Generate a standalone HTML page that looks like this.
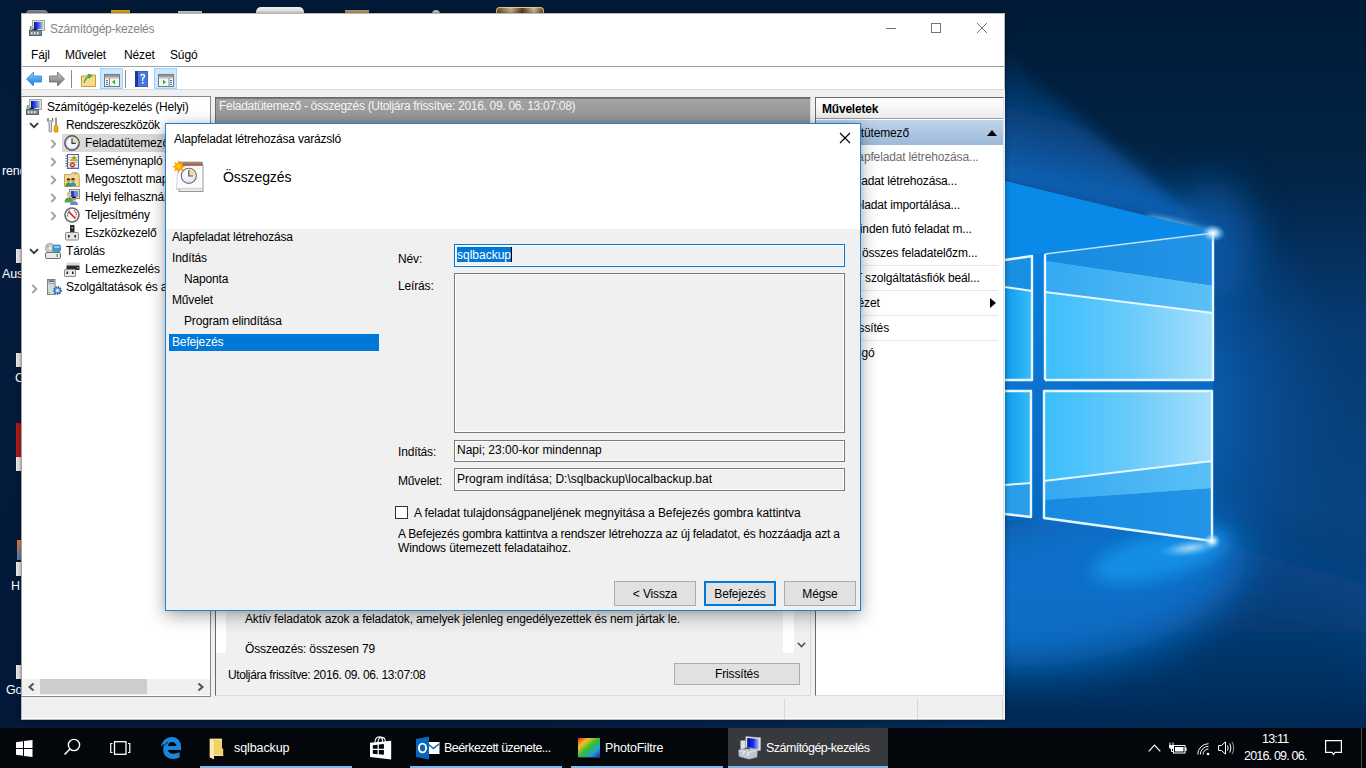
<!DOCTYPE html>
<html><head><meta charset="utf-8">
<style>
*{margin:0;padding:0;box-sizing:border-box}
html,body{width:1366px;height:768px;overflow:hidden;background:#011b39}
body{position:relative;font-family:"Liberation Sans",sans-serif;font-size:12px;color:#000}
.a{position:absolute}
.t{position:absolute;white-space:nowrap;font-size:12px;line-height:15px;letter-spacing:-0.15px;margin-top:1px}
svg{position:absolute;overflow:visible}
</style></head><body>
<svg class="a" style="left:0;top:0" width="1366" height="728" viewBox="0 0 1366 728">
<defs>
<linearGradient id="bgv" x1="0" y1="0" x2="0" y2="1">
<stop offset="0" stop-color="#001a37"/><stop offset="0.25" stop-color="#022547"/><stop offset="0.45" stop-color="#063a72"/><stop offset="0.7" stop-color="#084482"/><stop offset="0.85" stop-color="#053a72"/><stop offset="1" stop-color="#032a55"/>
</linearGradient>
<radialGradient id="glow1" cx="1090" cy="400" r="260" gradientUnits="userSpaceOnUse">
<stop offset="0" stop-color="#0a78d8" stop-opacity="1"/><stop offset="0.5" stop-color="#0a64bb" stop-opacity="0.7"/><stop offset="1" stop-color="#0a4f95" stop-opacity="0"/>
</radialGradient>
<linearGradient id="beamTop" gradientUnits="userSpaceOnUse" x1="0" y1="60" x2="0" y2="200">
<stop offset="0" stop-color="#0b3a6e" stop-opacity="0"/><stop offset="0.5" stop-color="#0a58a6" stop-opacity="0.8"/><stop offset="1" stop-color="#0c74cc" stop-opacity="1"/>
</linearGradient>
<linearGradient id="frame" gradientUnits="userSpaceOnUse" x1="1005" y1="200" x2="1213" y2="540">
<stop offset="0" stop-color="#0b88e6"/><stop offset="0.5" stop-color="#0a70cc"/><stop offset="1" stop-color="#0a62bc"/>
</linearGradient>
<radialGradient id="floorG" cx="1150" cy="550" r="230" gradientUnits="userSpaceOnUse">
<stop offset="0" stop-color="#0c86e2" stop-opacity="1"/><stop offset="0.45" stop-color="#0a6ac4" stop-opacity="0.85"/><stop offset="1" stop-color="#0a4f98" stop-opacity="0"/>
</radialGradient>
<linearGradient id="paneU" gradientUnits="userSpaceOnUse" x1="0" y1="290" x2="0" y2="380">
<stop offset="0" stop-color="#5ebff5"/><stop offset="1" stop-color="#8ad3fa"/>
</linearGradient>
<linearGradient id="paneL" gradientUnits="userSpaceOnUse" x1="0" y1="391" x2="0" y2="480">
<stop offset="0" stop-color="#80cdf8"/><stop offset="1" stop-color="#6cc4f6"/>
</linearGradient>
<radialGradient id="spot" cx="0.5" cy="0.5" r="0.5">
<stop offset="0" stop-color="#ffffff" stop-opacity="1"/><stop offset="0.35" stop-color="#c8ecff" stop-opacity="0.8"/><stop offset="1" stop-color="#5ab4f0" stop-opacity="0"/>
</radialGradient>
<filter id="blur6" x="-50%" y="-50%" width="200%" height="200%"><feGaussianBlur stdDeviation="8"/></filter>
<filter id="blur20" x="-50%" y="-50%" width="200%" height="200%"><feGaussianBlur stdDeviation="20"/></filter>
<filter id="blur2" x="-50%" y="-50%" width="200%" height="200%"><feGaussianBlur stdDeviation="2.5"/></filter>
<filter id="blur1"><feGaussianBlur stdDeviation="0.6"/></filter>
<linearGradient id="floorV" gradientUnits="userSpaceOnUse" x1="0" y1="515" x2="0" y2="728">
<stop offset="0" stop-color="#0a5aa8"/><stop offset="0.35" stop-color="#094e96"/><stop offset="0.7" stop-color="#053a72"/><stop offset="1" stop-color="#022650"/>
</linearGradient>
<linearGradient id="beamTop2" gradientUnits="userSpaceOnUse" x1="1100" y1="204" x2="1135" y2="60">
<stop offset="0" stop-color="#0a64b8" stop-opacity="1"/><stop offset="0.45" stop-color="#0a4f95" stop-opacity="0.7"/><stop offset="1" stop-color="#08345f" stop-opacity="0"/>
</linearGradient>
<radialGradient id="wedge" cx="1213" cy="541" r="280" gradientUnits="userSpaceOnUse">
<stop offset="0" stop-color="#22a8f4" stop-opacity="1"/><stop offset="0.3" stop-color="#0e88e0" stop-opacity="0.9"/><stop offset="0.65" stop-color="#0a6cc6" stop-opacity="0.6"/><stop offset="1" stop-color="#0a5aa8" stop-opacity="0"/>
</radialGradient>
<linearGradient id="pLL" gradientUnits="userSpaceOnUse" x1="1005" y1="0" x2="1032" y2="0"><stop offset="0" stop-color="#0e9aec"/><stop offset="1" stop-color="#3abcf8"/></linearGradient>
<linearGradient id="pRL" gradientUnits="userSpaceOnUse" x1="1045" y1="0" x2="1213" y2="0"><stop offset="0" stop-color="#3abefb"/><stop offset="0.5" stop-color="#68cafb"/><stop offset="1" stop-color="#a8e0fd"/></linearGradient>
<linearGradient id="pRT" gradientUnits="userSpaceOnUse" x1="1045" y1="0" x2="1213" y2="0"><stop offset="0" stop-color="#168ae0"/><stop offset="1" stop-color="#2494e6"/></linearGradient>
<linearGradient id="pRM" gradientUnits="userSpaceOnUse" x1="1045" y1="0" x2="1213" y2="0"><stop offset="0" stop-color="#34a8f2"/><stop offset="1" stop-color="#5cc0f6"/></linearGradient>
</defs>
<rect x="0" y="0" width="1366" height="728" fill="url(#bgv)"/>
<rect x="0" y="0" width="1366" height="728" fill="url(#glow1)"/>
<!-- beam glow above -->
<polygon points="960,20 1213,232 960,178" fill="url(#beamTop2)" filter="url(#blur6)"/>
<ellipse cx="1185" cy="226" rx="40" ry="4" fill="#8ad4fa" opacity="0.8" filter="url(#blur2)" transform="rotate(13.8 1185 226)"/>
<ellipse cx="1213" cy="240" rx="40" ry="60" fill="#0c66be" opacity="0.6" filter="url(#blur20)"/>
<!-- frame zone -->
<polygon points="960,170 1213,232 1213,541 960,515" fill="url(#frame)"/>
<polygon points="940,513 1213,541 1420,600 1420,780 940,780" fill="url(#floorV)" filter="url(#blur20)"/>
<polygon points="1213,541 1366,600 1366,728 1150,728" fill="#022a55" opacity="0.35" filter="url(#blur20)"/>
<ellipse cx="1080" cy="585" rx="170" ry="75" fill="#0c74d0" opacity="0.85" filter="url(#blur20)" transform="rotate(-12 1080 585)"/>
<ellipse cx="1160" cy="556" rx="70" ry="22" fill="#1496ec" opacity="0.8" filter="url(#blur6)" transform="rotate(-14 1160 556)"/>
<polygon points="1005,181 1213,232 1005,258" fill="#0a8ae8"/>
<!-- upper left pane -->
<polygon points="1005,260 1032,256 1032,380 1005,380" fill="url(#pLL)"/>
<polygon points="1005,260 1032,256 1032,290 1005,286" fill="#1a90e4"/>
<!-- upper right pane -->
<polygon points="1045,254 1213,234 1213,380 1045,380" fill="url(#pRL)"/>
<polygon points="1045,254 1213,234 1213,286 1045,261" fill="url(#pRT)"/>
<polygon points="1045,261 1213,286 1213,313 1045,292" fill="url(#pRM)"/>
<!-- lower left pane -->
<polygon points="1005,391 1031,391 1031,517 1005,514" fill="url(#pLL)"/>
<polygon points="1005,485 1031,483 1031,517 1005,514" fill="#2a9eea"/>
<!-- lower right pane -->
<polygon points="1044,391 1212,391 1212,541 1044,518" fill="url(#pRL)"/>
<polygon points="1044,481 1212,461 1212,488 1044,500" fill="url(#pRM)"/>
<polygon points="1044,500 1212,488 1212,541 1044,518" fill="url(#pRT)"/>
<!-- edge lines -->
<g stroke="#e6f7ff" stroke-width="2.4" fill="none" filter="url(#blur1)" stroke-linejoin="round">
<polyline points="1005,260 1032,256 1032,380 1005,380"/>
<polyline points="1045,380 1045,254"/><polyline points="1213,233 1213,380 1045,380"/><line x1="1045" y1="254" x2="1213" y2="233" stroke-width="1.4" stroke-opacity="0.8"/>
<polyline points="1005,391 1031,391 1031,517 1005,514"/>
<polygon points="1044,391 1212,391 1212,541 1044,518"/>
<line x1="1045" y1="292" x2="1213" y2="313" stroke-width="2"/>
<line x1="1005" y1="287" x2="1032" y2="291" stroke-width="2"/>
<line x1="1044" y1="481" x2="1212" y2="461" stroke-width="2"/>
<line x1="1005" y1="485" x2="1031" y2="483" stroke-width="2"/>
</g>
<ellipse cx="1213" cy="233" rx="12" ry="9" fill="url(#spot)"/>
<ellipse cx="1190" cy="548" rx="32" ry="9" fill="url(#spot)" opacity="0.6" transform="rotate(-8 1190 548)"/>
<ellipse cx="1212" cy="541" rx="9" ry="8" fill="url(#spot)"/>
</svg>

<div class="a" style="left:0;top:0;width:1005px;height:728px;background:linear-gradient(180deg,#021a37 0%,#051c3e 35%,#041a3a 70%,#031838 100%)"></div>
<div class="a" style="left:0;top:716px;width:1005px;height:12px;background:linear-gradient(90deg,#04183a 0%,#041c3e 55%,#052a55 95%,#042c58 100%)"></div>
<!-- desktop left strip bits -->
<div class="t" style="left:2px;top:163px;color:#fff;font-size:12.5px">rendszer</div>
<div class="t" style="left:2px;top:266px;color:#fff;font-size:12.5px">Ausztria</div>
<div class="t" style="left:15px;top:370px;color:#fff;font-size:12.5px">C</div>
<div class="t" style="left:11px;top:578px;color:#fff;font-size:12.5px">H</div>
<div class="t" style="left:6px;top:682px;color:#fff;font-size:12.5px">Google</div>
<div class="a" style="left:16px;top:249px;width:6px;height:14px;background:#e8e8e8"></div>
<div class="a" style="left:16px;top:353px;width:6px;height:14px;background:#e8e8e8"></div>
<div class="a" style="left:16px;top:423px;width:6px;height:40px;background:#b01818"></div>
<div class="a" style="left:16px;top:457px;width:6px;height:14px;background:#e8e8e8"></div>
<div class="a" style="left:17px;top:540px;width:5px;height:20px;background:linear-gradient(#e08030,#4a80c0)"></div>
<div class="a" style="left:16px;top:562px;width:6px;height:14px;background:#e8e8e8"></div>
<div class="a" style="left:16px;top:665px;width:6px;height:14px;background:#e8e8e8"></div>
<!-- top bits -->
<div class="a" style="left:26px;top:10px;width:22px;height:4px;background:#8a9098;border-radius:11px 11px 0 0"></div>
<div class="a" style="left:111px;top:10px;width:19px;height:4px;background:#e0b020"></div>
<div class="a" style="left:178px;top:11px;width:24px;height:3px;background:#d8d8d8"></div>
<div class="a" style="left:256px;top:7px;width:48px;height:7px;background:#eeeeee;border-radius:5px 5px 0 0"></div>
<div class="a" style="left:345px;top:10px;width:24px;height:4px;background:#b8a070"></div>
<div class="a" style="left:432px;top:10px;width:8px;height:4px;background:#c8c8c8;border-radius:4px 4px 0 0"></div>
<div class="a" style="left:496px;top:7px;width:48px;height:7px;background:linear-gradient(90deg,#6a5020,#c8b890 30%,#5a4018 55%,#d0c0a0 80%,#6a5020);border:1px solid #e0c890;border-bottom:none;border-radius:4px 4px 0 0"></div>

<!-- ============ MAIN WINDOW ============ -->
<div class="a" style="left:21px;top:13px;width:984px;height:707px;background:#fff;border:1px solid #b8b8b8;box-shadow:0 0 5px rgba(0,0,0,0.45)"></div>
<!-- title icon -->
<svg style="left:29px;top:20px" width="16" height="16" viewBox="0 0 16 16">
<defs><linearGradient id="scr2" x1="0" y1="0" x2="1" y2="0"><stop offset="0" stop-color="#0010b8"/><stop offset="0.45" stop-color="#2a4ee8"/><stop offset="1" stop-color="#b8c8f8"/></linearGradient></defs>
<rect x="3.5" y="0.5" width="12" height="10" fill="#e4e0cc" stroke="#aaa690"/>
<rect x="5" y="2" width="9" height="7" fill="url(#scr2)"/>
<rect x="0.8" y="6" width="1.8" height="4" fill="#8a9298"/><rect x="0.8" y="7.5" width="1.8" height="1.5" fill="#3ad03a"/>
<path d="M3.5 10.5 Q6 8 8.5 10.5" stroke="#222" stroke-width="1.3" fill="none"/>
<rect x="0.5" y="10.5" width="12" height="5" fill="#7b8b95" stroke="#56646c"/>
<rect x="2" y="12.2" width="1.5" height="2" fill="#f0f0f0"/><rect x="5" y="12.2" width="1.5" height="2" fill="#f0f0f0"/><rect x="8" y="12.2" width="1.5" height="2" fill="#f0f0f0"/>
</svg>
<div class="t" style="left:50px;top:21px;color:#858585;letter-spacing:-0.25px">Számítógép-kezelés</div>
<!-- caption buttons -->
<div class="a" style="left:886px;top:28px;width:10px;height:1px;background:#777"></div>
<div class="a" style="left:931px;top:23px;width:10px;height:10px;border:1px solid #777"></div>
<svg style="left:977px;top:23px" width="10" height="10" viewBox="0 0 10 10"><path d="M0 0L10 10M10 0L0 10" stroke="#777" stroke-width="1"/></svg>

<!-- menu -->
<div class="t" style="left:31px;top:47px">Fájl</div>
<div class="t" style="left:65px;top:47px">Művelet</div>
<div class="t" style="left:124px;top:47px">Nézet</div>
<div class="t" style="left:170px;top:47px">Súgó</div>
<div class="a" style="left:22px;top:66px;width:983px;height:1px;background:#a0a0a0"></div>

<!-- toolbar -->
<svg style="left:26px;top:71px" width="16" height="16" viewBox="0 0 16 16">
<defs><linearGradient id="bA" x1="0" y1="0" x2="0" y2="1"><stop offset="0" stop-color="#8fd0ff"/><stop offset="1" stop-color="#0a78d8"/></linearGradient></defs>
<path d="M0.5 8 L7.5 1 L7.5 5 L15.5 5 L15.5 11 L7.5 11 L7.5 15 Z" fill="url(#bA)" stroke="#2a86d8" stroke-width="0.8"/>
</svg>
<svg style="left:49px;top:71px" width="16" height="16" viewBox="0 0 16 16">
<defs><linearGradient id="bB" x1="0" y1="0" x2="0" y2="1"><stop offset="0" stop-color="#c9c9c9"/><stop offset="1" stop-color="#6f6f6f"/></linearGradient></defs>
<path d="M15.5 8 L8.5 1 L8.5 5 L0.5 5 L0.5 11 L8.5 11 L8.5 15 Z" fill="url(#bB)" stroke="#6a6a6a" stroke-width="0.8"/>
</svg>
<div class="a" style="left:71px;top:70px;width:1px;height:18px;background:#8a8a8a"></div>
<svg style="left:81px;top:72px" width="15" height="15" viewBox="0 0 15 15">
<path d="M0.5 4 L5 4 L6 3 L14.5 3 L14.5 14.5 L0.5 14.5 Z" fill="#f0d58a" stroke="#c59d40" stroke-width="1"/>
<rect x="1" y="6" width="13" height="8" fill="#f6dc8f"/>
<path d="M3 11 Q4 5 8 4 L7 2 L11 3.5 L8 6.5 L8 5 Q5 6 3 11Z" fill="#3cc23a" stroke="#1e8a1e" stroke-width="0.5"/>
</svg>
<div class="a" style="left:100px;top:68px;width:23px;height:21px;background:#cce8ff;border:1px solid #99d1ff"></div>
<svg style="left:104px;top:74px" width="16" height="13" viewBox="0 0 16 13">
<rect x="0.5" y="0.5" width="15" height="12" fill="#f4f4f4" stroke="#7a7a7a"/>
<rect x="1" y="1" width="14" height="2" fill="#9a9a9a"/><rect x="1" y="3.5" width="14" height="0.8" fill="#9a9a9a"/>
<rect x="5" y="4" width="1" height="8.5" fill="#8a8a8a"/>
<rect x="2" y="6" width="2" height="1" fill="#3a78c8"/><rect x="2" y="8" width="2" height="1" fill="#3a78c8"/><rect x="2" y="10" width="2" height="1" fill="#3a78c8"/>
<path d="M11 5.5 L8 8 L11 10.5Z" fill="#32b832"/>
</svg>
<div class="a" style="left:125px;top:70px;width:1px;height:18px;background:#8a8a8a"></div>
<svg style="left:135px;top:71px" width="13" height="16" viewBox="0 0 13 16">
<rect x="0" y="0" width="13" height="16" fill="#2a4fb8"/><rect x="0" y="0" width="3" height="16" fill="#1c3a96"/>
<rect x="3" y="0.5" width="9.5" height="15" fill="#4a78d8"/>
<path d="M5.2 5.2 Q5.2 2.8 7.7 2.8 Q10.2 2.8 10.2 5 Q10.2 6.6 8.3 7.6 L8.3 9.8 L7 9.8 L7 7 Q8.8 6.1 8.8 5.1 Q8.8 4.1 7.7 4.1 Q6.6 4.1 6.6 5.2Z" fill="#fff"/>
<rect x="6.9" y="11" width="1.6" height="1.6" fill="#fff"/>
</svg>
<div class="a" style="left:154px;top:68px;width:23px;height:21px;background:#cce8ff;border:1px solid #99d1ff"></div>
<svg style="left:158px;top:74px" width="16" height="13" viewBox="0 0 16 13">
<rect x="0.5" y="0.5" width="15" height="12" fill="#f4f4f4" stroke="#7a7a7a"/>
<rect x="1" y="1" width="14" height="2" fill="#9a9a9a"/><rect x="1" y="3.5" width="14" height="0.8" fill="#9a9a9a"/>
<rect x="10.5" y="4" width="1" height="8.5" fill="#8a8a8a"/>
<rect x="12" y="6" width="2" height="1" fill="#3a78c8"/><rect x="12" y="8" width="2" height="1" fill="#3a78c8"/><rect x="12" y="10" width="2" height="1" fill="#3a78c8"/>
<path d="M5 5.5 L8 8 L5 10.5Z" fill="#32b832"/>
</svg>
<!-- content bg -->
<div class="a" style="left:22px;top:89px;width:983px;height:608px;background:#f0f0f0;border-top:1px solid #dadada"></div>

<!-- ===== tree panel ===== -->
<div class="a" style="left:21px;top:96px;width:190px;height:601px;background:#fff;border:1px solid #828790;border-left-color:#a0a0a0"></div>
<!-- tree selection -->
<div class="a" style="left:62px;top:134px;width:150px;height:18px;background:#d9d9d9"></div>

<div class="a" style="left:0;top:0;width:211px;height:679px;overflow:hidden">
<!-- tree rows -->
<svg style="left:26px;top:99px" width="16" height="16" viewBox="0 0 16 16">
<defs><linearGradient id="scr" x1="0" y1="0" x2="1" y2="0"><stop offset="0" stop-color="#0010b8"/><stop offset="0.45" stop-color="#2a4ee8"/><stop offset="1" stop-color="#b8c8f8"/></linearGradient></defs>
<rect x="3.5" y="0.5" width="12" height="10" fill="#e4e0cc" stroke="#aaa690"/>
<rect x="5" y="2" width="9" height="7" fill="url(#scr)"/>
<rect x="0.8" y="6" width="1.8" height="4" fill="#8a9298"/><rect x="0.8" y="7.5" width="1.8" height="1.5" fill="#3ad03a"/>
<path d="M3.5 10.5 Q6 8 8.5 10.5" stroke="#222" stroke-width="1.3" fill="none"/>
<rect x="0.5" y="10.5" width="12" height="5" fill="#7b8b95" stroke="#56646c"/>
<rect x="2" y="12.2" width="1.5" height="2" fill="#f0f0f0"/><rect x="5" y="12.2" width="1.5" height="2" fill="#f0f0f0"/><rect x="8" y="12.2" width="1.5" height="2" fill="#f0f0f0"/>
</svg>
<div class="t" style="left:47px;top:99px;letter-spacing:-0.2px">Számítógép-kezelés (Helyi)</div>

<svg style="left:29px;top:122px" width="10" height="7" viewBox="0 0 10 7"><path d="M1 1.2 L5 5.2 L9 1.2" stroke="#3a3a3a" stroke-width="1.9" fill="none"/></svg>
<svg style="left:47px;top:117px" width="12" height="16" viewBox="0 0 12 16">
<path d="M1.2 1 Q0 3 1 4.8 Q1.6 5.6 2.2 5.8 L2.2 14.6 Q3.3 15.6 4.4 14.6 L4.4 5.8 Q5 5.6 5.6 4.8 Q6.6 3 5.4 1 L5.4 3.2 L4.2 4 L2.4 4 L1.2 3.2Z" fill="#f4f4f4" stroke="#6e6e6e" stroke-width="0.9" stroke-linejoin="round"/>
<rect x="8.4" y="0.5" width="1.2" height="8" fill="#555"/>
<path d="M7.2 9 Q9 7.8 10.8 9 L11 14.5 Q9 16.2 7 14.5Z" fill="#f0b000" stroke="#b07800" stroke-width="0.6"/>
</svg>
<div class="t" style="left:66px;top:117px;letter-spacing:-0.5px">Rendszereszközök</div>

<svg style="left:50px;top:139px" width="7" height="10" viewBox="0 0 7 10"><path d="M1.3 1 L5.3 5 L1.3 9" stroke="#a0a0a0" stroke-width="1.8" fill="none"/></svg>
<svg style="left:64px;top:135px" width="16" height="16" viewBox="0 0 16 16">
<circle cx="8" cy="8" r="7.2" fill="#e6eaf0" stroke="#555" stroke-width="1.4"/><circle cx="8" cy="8" r="5.6" fill="#f2f5f9" stroke="#b4bcc6" stroke-width="0.5"/>
<path d="M8 2.4 A5.6 5.6 0 0 1 13.6 8 L8 8Z" fill="#f0d8a0"/>
<path d="M8 3.4 L8 8.4 L11.8 8.4" stroke="#2a3a5a" stroke-width="1.2" fill="none"/>
</svg>
<div class="t" style="left:85px;top:135px">Feladatütemező</div>

<svg style="left:50px;top:157px" width="7" height="10" viewBox="0 0 7 10"><path d="M1.3 1 L5.3 5 L1.3 9" stroke="#a0a0a0" stroke-width="1.8" fill="none"/></svg>
<svg style="left:65px;top:154px" width="14" height="15" viewBox="0 0 14 15">
<rect x="2.5" y="0.5" width="11" height="14" fill="#f4f6fa" stroke="#4a6aa8"/>
<rect x="3" y="3" width="10" height="0.7" fill="#9ab0d8"/><rect x="3" y="5.5" width="10" height="0.7" fill="#9ab0d8"/><rect x="3" y="8" width="10" height="0.7" fill="#9ab0d8"/><rect x="3" y="10.5" width="10" height="0.7" fill="#9ab0d8"/><rect x="3" y="13" width="10" height="0.7" fill="#9ab0d8"/>
<path d="M0.5 2 L3 2 M0.5 4.5 L3 4.5 M0.5 7 L3 7 M0.5 9.5 L3 9.5 M0.5 12 L3 12" stroke="#555" stroke-width="1"/>
<path d="M9 1.5 L12.5 7 L5.5 7Z" fill="#f5c400" stroke="#a08000" stroke-width="0.5"/><rect x="8.6" y="3.3" width="0.8" height="2" fill="#222"/>
<circle cx="7.5" cy="10.8" r="2.6" fill="#d62828"/><path d="M6.3 9.6 L8.7 12 M8.7 9.6 L6.3 12" stroke="#fff" stroke-width="0.9"/>
</svg>
<div class="t" style="left:85px;top:153px">Eseménynapló</div>

<svg style="left:50px;top:175px" width="7" height="10" viewBox="0 0 7 10"><path d="M1.3 1 L5.3 5 L1.3 9" stroke="#a0a0a0" stroke-width="1.8" fill="none"/></svg>
<svg style="left:64px;top:172px" width="16" height="15" viewBox="0 0 16 15">
<path d="M0.5 2.5 L7 2.5 L8 0.8 L13.5 0.8 L15 2.5 L15.5 14.5 L0.5 14.5Z" fill="#f2d98e" stroke="#c09a40" stroke-width="0.9"/>
<rect x="10" y="1.3" width="3" height="1" fill="#6aa0e0"/>
<circle cx="4.5" cy="8.3" r="1.9" fill="#c89060"/><path d="M4.5 6.2 Q2.6 6.4 2.7 8 L6.3 8 Q6.4 6.4 4.5 6.2Z" fill="#3a2a1a"/>
<path d="M1.5 14.5 Q1.5 10.5 4.5 10.5 Q7.5 10.5 7.5 14.5Z" fill="#28a048"/>
<circle cx="9" cy="8" r="1.9" fill="#c89060"/><path d="M9 5.9 Q7.1 6.1 7.2 7.7 L10.8 7.7 Q10.9 6.1 9 5.9Z" fill="#3a2a1a"/>
<path d="M6 14 Q6 10.2 9 10.2 Q12 10.2 12 14Z" fill="#3a8ac8"/>
</svg>
<div class="t" style="left:85px;top:171px">Megosztott mappák</div>

<svg style="left:50px;top:193px" width="7" height="10" viewBox="0 0 7 10"><path d="M1.3 1 L5.3 5 L1.3 9" stroke="#a0a0a0" stroke-width="1.8" fill="none"/></svg>
<svg style="left:64px;top:189px" width="16" height="16" viewBox="0 0 16 16">
<rect x="5.5" y="0.5" width="10" height="9" fill="#dcdcd4" stroke="#8a8a82"/><rect x="7" y="2" width="7" height="6" fill="#1a40d0"/><rect x="10" y="2" width="4" height="6" fill="#6a8ae8"/>
<circle cx="5" cy="5.5" r="2.3" fill="#e0c098"/><path d="M5 3.1 Q2.8 3.3 2.9 5 L7.1 5 Q7.2 3.3 5 3.1Z" fill="#d8c080"/>
<path d="M0.5 13.5 Q0.5 8.6 5 8.6 Q9 8.6 9 13.5Z" fill="#58a050"/>
<circle cx="10" cy="9.5" r="2.2" fill="#c08860"/><path d="M10 7.2 Q7.8 7.4 7.9 9 L12.1 9 Q12.2 7.4 10 7.2Z" fill="#2a1a10"/>
<path d="M6 16 Q6 12.2 10 12.2 Q14 12.2 14 16Z" fill="#5a90d0"/>
</svg>
<div class="t" style="left:85px;top:189px">Helyi felhasználók és csoportok</div>

<svg style="left:50px;top:211px" width="7" height="10" viewBox="0 0 7 10"><path d="M1.3 1 L5.3 5 L1.3 9" stroke="#a0a0a0" stroke-width="1.8" fill="none"/></svg>
<svg style="left:64px;top:207px" width="16" height="16" viewBox="0 0 16 16">
<circle cx="8" cy="8" r="7" fill="#fbfbfb" stroke="#6a6a6a" stroke-width="1.6"/>
<path d="M3.5 9.5 Q3.5 5 6 3.5" stroke="#3a8a5a" stroke-width="1.3" fill="none" stroke-dasharray="1.2 0.8"/>
<path d="M10 3.5 Q12.8 5.5 12.5 9.5" stroke="#c82828" stroke-width="1.3" fill="none" stroke-dasharray="1.2 0.8"/>
<path d="M4.5 4.5 L11.5 11.5" stroke="#e01818" stroke-width="1.7"/>
</svg>
<div class="t" style="left:85px;top:207px">Teljesítmény</div>

<svg style="left:64px;top:225px" width="16" height="16" viewBox="0 0 16 16">
<rect x="6" y="0" width="4.5" height="7.5" fill="#2e2e2e"/><rect x="7.5" y="2" width="1.5" height="1.5" fill="#3ae03a"/>
<rect x="1.5" y="7.5" width="13" height="7.5" rx="0.8" fill="#e6e6e6" stroke="#8a8a8a"/>
<rect x="4" y="10" width="1.6" height="2.5" fill="#222"/><rect x="10.4" y="10" width="1.6" height="2.5" fill="#222"/>
</svg>
<div class="t" style="left:85px;top:225px">Eszközkezelő</div>

<svg style="left:29px;top:248px" width="10" height="7" viewBox="0 0 10 7"><path d="M1 1.2 L5 5.2 L9 1.2" stroke="#3a3a3a" stroke-width="1.9" fill="none"/></svg>
<svg style="left:45px;top:243px" width="16" height="16" viewBox="0 0 16 16">
<circle cx="5" cy="5" r="4.8" fill="#c8c8c8" stroke="#909090" stroke-width="0.6"/><circle cx="5" cy="5" r="1.2" fill="#fff"/><path d="M2 3 L3.5 4" stroke="#3ac03a" stroke-width="1"/>
<rect x="8" y="2" width="7.5" height="6.5" rx="1.2" fill="#3a9ad8" stroke="#2a6aa0" stroke-width="0.6"/><rect x="9" y="3" width="5.5" height="2" fill="#8acaf0"/>
<rect x="0.5" y="9.5" width="15" height="6" rx="1.5" fill="#eaeaea" stroke="#707070"/><rect x="11.5" y="11" width="1.5" height="3" fill="#3ac03a"/>
</svg>
<div class="t" style="left:66px;top:243px">Tárolás</div>

<svg style="left:64px;top:262px" width="16" height="15" viewBox="0 0 16 15">
<rect x="2.5" y="0.5" width="13" height="3" fill="#d8d8d8"/>
<rect x="2.5" y="3.5" width="13" height="4.5" fill="#2a2a2a"/><rect x="13" y="5" width="1.5" height="1.3" fill="#3ae03a"/>
<rect x="0.5" y="7.5" width="11" height="7" rx="0.6" fill="#e6e6e6" stroke="#8a8a8a"/>
<rect x="2.5" y="9.5" width="1.5" height="2.5" fill="#222"/><rect x="8" y="9.5" width="1.5" height="2.5" fill="#222"/>
</svg>
<div class="t" style="left:85px;top:261px">Lemezkezelés</div>

<svg style="left:31px;top:284px" width="7" height="10" viewBox="0 0 7 10"><path d="M1.3 1 L5.3 5 L1.3 9" stroke="#a0a0a0" stroke-width="1.8" fill="none"/></svg>
<svg style="left:47px;top:279px" width="15" height="16" viewBox="0 0 15 16">
<rect x="0.5" y="0.5" width="7.5" height="15" fill="#d4dade" stroke="#7a8288"/>
<rect x="1.5" y="1.5" width="5.5" height="1.2" fill="#3a3a3a"/><rect x="1.5" y="4" width="5.5" height="1" fill="#98a0a6"/><rect x="1.5" y="13" width="1.5" height="1" fill="#3ac03a"/>
<g transform="translate(10.5,11.5)"><circle r="3.6" fill="#5a9ad8" stroke="#2a5a98" stroke-width="1.6" stroke-dasharray="1.4 1"/><circle r="1.6" fill="#e8f0f8"/></g>
</svg>
<div class="t" style="left:66px;top:279px">Szolgáltatások és alkalmazások</div>

</div>
<!-- tree h-scrollbar -->
<div class="a" style="left:22px;top:679px;width:188px;height:16px;background:#f0f0f0"></div>
<div class="a" style="left:40px;top:679px;width:107px;height:15px;background:#cdcdcd"></div>
<svg style="left:28px;top:683px" width="7" height="8" viewBox="0 0 7 8"><path d="M5.5 0.5 L1.5 4 L5.5 7.5" stroke="#505050" stroke-width="2" fill="none"/></svg>
<svg style="left:197px;top:683px" width="7" height="8" viewBox="0 0 7 8"><path d="M1.5 0.5 L5.5 4 L1.5 7.5" stroke="#505050" stroke-width="2" fill="none"/></svg>

<!-- ===== middle pane ===== -->
<div class="a" style="left:215px;top:97px;width:596px;height:599px;background:#f0f0f0;border:1px solid #6a6a6a;border-right-color:#dcdcdc;border-bottom-color:#dcdcdc"></div>
<div class="a" style="left:216px;top:98px;width:594px;height:26px;background:linear-gradient(#7a7a7a 0px,#7a7a7a 1px,#a3a3a3 1px,#9a9a9a 60%,#8f8f8f 100%)"></div>
<div class="t" style="left:219px;top:98px;color:#f4f4f4;letter-spacing:-0.3px">Feladatütemező - összegzés (Utoljára frissítve: 2016. 09. 06. 13:07:08)</div>
<div class="a" style="left:216px;top:590px;width:10px;height:63px;background:#fff"></div>
<div class="a" style="left:783px;top:590px;width:11px;height:63px;background:#fff"></div>
<svg style="left:797px;top:642px" width="9" height="6" viewBox="0 0 9 6"><path d="M0.8 0.8 L4.5 4.5 L8.2 0.8" stroke="#505050" stroke-width="1.6" fill="none"/></svg>
<div class="a" style="left:0;top:0;width:783px;height:653px;overflow:hidden">
<div class="t" style="left:245px;top:611px">Aktív feladatok azok a feladatok, amelyek jelenleg engedélyezettek és nem jártak le.</div>
<div class="t" style="left:245px;top:641px">Összegzés: összesen 79</div>
</div>
<div class="t" style="left:228px;top:667px;letter-spacing:-0.37px">Utoljára frissítve: 2016. 09. 06. 13:07:08</div>
<div class="a" style="left:674px;top:663px;width:126px;height:22px;background:#e1e1e1;border:1px solid #adadad"></div>
<div class="t" style="left:674px;top:666px;width:126px;text-align:center">Frissítés</div>

<!-- ===== actions pane ===== -->
<div class="a" style="left:815px;top:97px;width:189px;height:599px;background:#fff;border:1px solid #6a6a6a;border-right-color:#e3e3e3;border-bottom-color:#dcdcdc"></div>
<div class="a" style="left:816px;top:99px;width:187px;height:19px;background:linear-gradient(#ffffff,#ececec)"></div>
<div class="a" style="left:816px;top:118px;width:187px;height:1px;background:#9a9a9a"></div>
<div class="t" style="left:822px;top:101px;font-weight:bold;letter-spacing:-0.2px">Műveletek</div>
<div class="a" style="left:816px;top:120px;width:187px;height:25px;background:linear-gradient(#bfd4ea,#9cb9d8)"></div>
<div class="t" style="left:825px;top:125px">Feladatütemező</div>
<svg style="left:987px;top:130px" width="10" height="6" viewBox="0 0 10 6"><path d="M0 6 L5 0 L10 6Z" fill="#000"/></svg>
<div class="t" style="left:847px;top:149px;color:#6d6d6d">Alapfeladat létrehozása...</div>
<div class="t" style="left:845px;top:173px">Feladat létrehozása...</div>
<div class="t" style="left:848px;top:197px">Feladat importálása...</div>
<div class="t" style="left:850px;top:221px">Minden futó feladat m...</div>
<div class="t" style="left:845px;top:245px">Az összes feladatelőzm...</div>
<div class="a" style="left:820px;top:265px;width:178px;height:1px;background:#e6e6e6"></div>
<div class="t" style="left:848px;top:270px">AT szolgáltatásfiók beál...</div>
<div class="a" style="left:820px;top:290px;width:178px;height:1px;background:#e6e6e6"></div>
<div class="t" style="left:849px;top:295px">Nézet</div>
<svg style="left:990px;top:298px" width="6" height="10" viewBox="0 0 6 10"><path d="M0 0 L6 5 L0 10Z" fill="#000"/></svg>
<div class="a" style="left:820px;top:315px;width:178px;height:1px;background:#e6e6e6"></div>
<div class="t" style="left:845px;top:320px">Frissítés</div>
<div class="a" style="left:820px;top:340px;width:178px;height:1px;background:#e6e6e6"></div>
<div class="t" style="left:847px;top:345px">Súgó</div>

<!-- status bar -->
<div class="a" style="left:22px;top:697px;width:983px;height:22px;background:#f0f0f0;border-bottom:1px solid #fff"></div>
<div class="a" style="left:784px;top:698px;width:1px;height:21px;background:#d7d7d7"></div>
<div class="a" style="left:917px;top:698px;width:1px;height:21px;background:#d7d7d7"></div>
<div class="a" style="left:1002px;top:698px;width:1px;height:21px;background:#d7d7d7"></div>

<!-- ============ DIALOG ============ -->
<div class="a" style="left:165px;top:123px;width:696px;height:488px;background:#f0f0f0;border:1px solid #1883d7;box-shadow:0 5px 17px rgba(0,0,0,0.33),0 0 6px rgba(0,0,0,0.1)"></div>
<div class="a" style="left:166px;top:124px;width:694px;height:105px;background:#fff"></div>
<div class="t" style="left:174px;top:131px;letter-spacing:-0.2px">Alapfeladat létrehozása varázsló</div>
<svg style="left:840px;top:133px" width="10" height="10" viewBox="0 0 10 10"><path d="M0 0L10 10M10 0L0 10" stroke="#000" stroke-width="1.1"/></svg>
<!-- header icon -->
<svg style="left:172px;top:159px" width="32" height="33" viewBox="0 0 32 33">
<defs><linearGradient id="cal" x1="0" y1="0" x2="0" y2="1"><stop offset="0" stop-color="#b88a78"/><stop offset="1" stop-color="#8a5a48"/></linearGradient>
<radialGradient id="face" cx="0.4" cy="0.4" r="0.7"><stop offset="0" stop-color="#ffffff"/><stop offset="1" stop-color="#d6e2ee"/></radialGradient>
<radialGradient id="sun" cx="0.5" cy="0.45" r="0.5"><stop offset="0" stop-color="#ffe020"/><stop offset="1" stop-color="#ff9800"/></radialGradient></defs>
<rect x="7" y="6" width="24" height="26.5" fill="#e8e8e8" stroke="#9a9a9a" stroke-width="1"/>
<path d="M6 3 L30.5 3 L30.5 29.5 L6 29.5 L4.5 31 Z" fill="#fafafa" stroke="#c8c8c8" stroke-width="0.8"/>
<rect x="6" y="2.8" width="24.6" height="4" fill="url(#cal)"/>
<circle cx="16.8" cy="16.8" r="7.6" fill="url(#face)" stroke="#707478" stroke-width="1.1"/>
<path d="M16.8 10 A6.8 6.8 0 0 1 23.6 16.8 L16.8 16.8Z" fill="#f2dca0"/>
<path d="M16.8 11 L16.8 17 L21 17" stroke="#3a5070" stroke-width="1.1" fill="none"/>
<g transform="translate(6.7,7.7)">
<path d="M0 -7 L1.3 -3 L4.9 -4.9 L3 -1.3 L7 0 L3 1.3 L4.9 4.9 L1.3 3 L0 7 L-1.3 3 L-4.9 4.9 L-3 1.3 L-7 0 L-3 -1.3 L-4.9 -4.9 L-1.3 -3Z" fill="#ff9a10"/>
<circle r="3.8" fill="url(#sun)"/></g>
</svg>
<div class="a" style="left:223px;top:168px;font-size:14px;line-height:18px;white-space:nowrap;letter-spacing:-0.1px">Összegzés</div>

<!-- steps -->
<div class="t" style="left:172px;top:229px;letter-spacing:-0.2px">Alapfeladat létrehozása</div>
<div class="t" style="left:172px;top:250px">Indítás</div>
<div class="t" style="left:184px;top:271px">Naponta</div>
<div class="t" style="left:172px;top:292px">Művelet</div>
<div class="t" style="left:184px;top:313px;letter-spacing:-0.17px">Program elindítása</div>
<div class="a" style="left:169px;top:334px;width:210px;height:17px;background:#0078d7"></div>
<div class="t" style="left:172px;top:334px;color:#fff">Befejezés</div>

<!-- form -->
<div class="t" style="left:398px;top:251px">Név:</div>
<div class="a" style="left:454px;top:244px;width:391px;height:23px;background:#f0f0f0;border:1px solid #0078d7;box-shadow:inset 0 0 0 1px #fff"></div>
<div class="a" style="left:457px;top:247px;width:54px;height:15px;background:#0078d7"></div>
<div class="t" style="left:457px;top:247px;color:#fff;letter-spacing:0">sqlbackup</div>
<div class="a" style="left:511px;top:247px;width:1px;height:15px;background:#000"></div>
<div class="t" style="left:398px;top:278px">Leírás:</div>
<div class="a" style="left:454px;top:273px;width:391px;height:160px;background:#f0f0f0;border:1px solid #7a7a7a;box-shadow:inset 0 0 0 1px #fff"></div>
<div class="t" style="left:398px;top:444px">Indítás:</div>
<div class="a" style="left:454px;top:440px;width:391px;height:22px;background:#f0f0f0;border:1px solid #7a7a7a;box-shadow:inset 0 0 0 1px #fff"></div>
<div class="t" style="left:457px;top:442px;letter-spacing:0">Napi; 23:00-kor mindennap</div>
<div class="t" style="left:398px;top:473px">Művelet:</div>
<div class="a" style="left:454px;top:468px;width:391px;height:23px;background:#f0f0f0;border:1px solid #7a7a7a;box-shadow:inset 0 0 0 1px #fff"></div>
<div class="t" style="left:457px;top:471px;letter-spacing:0.02px">Program indítása; D:\sqlbackup\localbackup.bat</div>
<div class="a" style="left:395px;top:506px;width:13px;height:13px;background:#fff;border:1px solid #333"></div>
<div class="t" style="left:414px;top:505px;letter-spacing:-0.08px">A feladat tulajdonságpaneljének megnyitása a Befejezés gombra kattintva</div>
<div class="t" style="left:398px;top:526px;letter-spacing:-0.2px">A Befejezés gombra kattintva a rendszer létrehozza az új feladatot, és hozzáadja azt a</div>
<div class="t" style="left:398px;top:540px;letter-spacing:-0.1px">Windows ütemezett feladataihoz.</div>
<!-- buttons -->
<div class="a" style="left:614px;top:581px;width:82px;height:25px;background:#e1e1e1;border:1px solid #adadad"></div>
<div class="t" style="left:614px;top:586px;width:82px;text-align:center">&lt; Vissza</div>
<div class="a" style="left:704px;top:581px;width:72px;height:25px;background:#e1e1e1;border:2px solid #0078d7"></div>
<div class="t" style="left:704px;top:586px;width:72px;text-align:center">Befejezés</div>
<div class="a" style="left:784px;top:581px;width:72px;height:25px;background:#e1e1e1;border:1px solid #adadad"></div>
<div class="t" style="left:784px;top:586px;width:72px;text-align:center">Mégse</div>

<!-- ============ TASKBAR ============ -->
<div class="a" style="left:0;top:728px;width:1366px;height:40px;background:#03060b"></div>
<svg style="left:16px;top:740px" width="17" height="17" viewBox="0 0 17 17">
<path d="M0 2.3 L7 1.3 L7 8 L0 8Z M8 1.1 L16.5 0 L16.5 8 L8 8Z M0 9 L7 9 L7 15.7 L0 14.7Z M8 9 L16.5 9 L16.5 17 L8 15.9Z" fill="#fff"/>
</svg>
<svg style="left:63px;top:738px" width="18" height="18" viewBox="0 0 18 18">
<circle cx="11" cy="7" r="5.6" stroke="#fff" stroke-width="1.4" fill="none"/><path d="M7 11 L1.5 16.5" stroke="#fff" stroke-width="1.6"/>
</svg>
<svg style="left:110px;top:741px" width="21" height="14" viewBox="0 0 21 14">
<rect x="4.5" y="0.7" width="11.5" height="12.6" stroke="#fff" stroke-width="1.3" fill="none"/>
<path d="M2.5 2.5 L0.7 2.5 L0.7 11.5 L2.5 11.5 M18 2.5 L19.8 2.5 L19.8 11.5 L18 11.5" stroke="#fff" stroke-width="1.2" fill="none"/>
</svg>
<svg style="left:156px;top:733px" width="30" height="30" viewBox="0 0 30 30">
<path fill="#1a86dc" fill-rule="evenodd" d="M16.1 4 C21.5 4 25.1 8.5 25.1 14 L25.1 17 L12 17 C12.3 19.3 14.2 20.7 17 20.7 C19.5 20.7 21.8 20 23.6 19 L23.6 24.3 C21.8 25.4 19.4 25.9 16.8 25.9 C11 25.9 7.2 22.2 7.2 16.3 C7.2 12.5 9.2 9.6 12.6 8.7 C10.5 9.8 9.6 11.3 9.4 12.8 C10.5 10.6 12.6 9 15.5 9 C18.5 9 20.4 10.8 20.5 13 L12 13 C12.3 11 13.3 9.6 15 9 C11 9.3 6.6 11.4 4.9 14 C5.8 8.1 10.3 4 16.1 4 Z"/>
</svg>
<!-- sqlbackup -->
<svg style="left:209px;top:738px" width="15" height="22" viewBox="0 0 15 22">
<path d="M0.8 0.8 L13 0.8 L13 10.3 L14.2 10.8 L14.2 18 L5 18 L5 21.2 L0.8 19.2Z" fill="#f2d06a"/>
<rect x="0.8" y="0.8" width="12.2" height="1" fill="#fbe49a"/>
<rect x="5" y="16.8" width="9.2" height="1.2" fill="#fbe49a"/>
<path d="M0.8 0.8 L4.8 3.4 L4.8 21.2 L0.8 19.2Z" fill="#fde9ad"/>
</svg>
<div class="t" style="left:234px;top:740px;color:#fff;font-size:12.5px;letter-spacing:-0.1px">sqlbackup</div>
<div class="a" style="left:200px;top:766px;width:152px;height:2px;background:#76b9ed"></div>
<!-- store -->
<svg style="left:370px;top:736px" width="22" height="24" viewBox="0 0 22 24">
<path d="M5 6.5 Q5 0.9 9.3 0.9 Q12.6 0.9 12.6 5.8 M8 6.2 Q8 1.4 12 1.4 Q15.2 1.4 15.4 6" stroke="#fff" stroke-width="1.1" fill="none"/>
<path d="M0 6.8 L21.2 4.8 L21.2 23.6 L0 21Z" fill="#fff"/>
<path d="M2.8 9.2 L7.6 8.7 L7.6 12.8 L2.8 12.8Z M8.8 8.5 L13.9 7.9 L13.9 12.8 L8.8 12.8Z M2.8 14 L7.6 14 L7.6 18.2 L2.8 17.7Z M8.8 14 L13.9 14 L13.9 18.8 L8.8 18.3Z" fill="#03060b"/>
</svg>
<!-- outlook -->
<svg style="left:416px;top:736px" width="24" height="24" viewBox="0 0 24 24">
<rect x="11" y="6" width="12.5" height="12" fill="#fff"/><path d="M12 8 L17.5 12.5 L23 8" stroke="#0a64b8" stroke-width="1.4" fill="none"/>
<path d="M0 3 L13 0.5 L13 23.5 L0 21Z" fill="#0a64b8"/>
<ellipse cx="6.5" cy="12" rx="3.6" ry="4.4" stroke="#fff" stroke-width="1.9" fill="none"/>
</svg>
<div class="t" style="left:444px;top:740px;color:#fff;font-size:12.5px;letter-spacing:-0.55px">Beérkezett üzenete...</div>
<div class="a" style="left:410px;top:766px;width:152px;height:2px;background:#76b9ed"></div>
<!-- photofiltre -->
<svg style="left:578px;top:738px" width="22" height="20" viewBox="0 0 22 20">
<defs><linearGradient id="pf" x1="0" y1="0" x2="1" y2="1"><stop offset="0" stop-color="#e8201a"/><stop offset="0.25" stop-color="#f0c020"/><stop offset="0.5" stop-color="#30c030"/><stop offset="0.75" stop-color="#20a0e0"/><stop offset="1" stop-color="#1a2aa8"/></linearGradient></defs>
<rect x="0" y="0" width="22" height="19" fill="url(#pf)"/><rect x="0" y="19" width="22" height="1" fill="#333"/>
</svg>
<div class="t" style="left:605px;top:740px;color:#fff;font-size:12.5px;letter-spacing:-0.2px">PhotoFiltre</div>
<div class="a" style="left:571px;top:766px;width:152px;height:2px;background:#76b9ed"></div>
<!-- active -->
<div class="a" style="left:728px;top:728px;width:160px;height:38px;background:#37393c"></div>
<div class="a" style="left:728px;top:766px;width:160px;height:2px;background:#76b9ed"></div>
<svg style="left:738px;top:736px" width="24" height="24" viewBox="0 0 24 24">
<defs><linearGradient id="scr3" x1="0" y1="0" x2="1" y2="0"><stop offset="0" stop-color="#0008c0"/><stop offset="0.5" stop-color="#1a30e0"/><stop offset="1" stop-color="#c0d0ff"/></linearGradient></defs>
<rect x="2.5" y="4.5" width="5" height="9" fill="#dfe3e6"/>
<path d="M7.8 0.6 L22.6 1.8 L22.4 14.5 L7.8 13.6Z" fill="#eceae0" stroke="#b8b6a8" stroke-width="0.6"/>
<path d="M9.2 2 L21.3 3 L21.1 12.9 L9.2 12.2Z" fill="url(#scr3)"/>
<path d="M0.5 14.2 Q6 11.5 12 11.8 L19.5 13.5 L19 21.2 L11 23.2 L1 20.5Z" fill="#bcc8cf" stroke="#8a969c" stroke-width="0.5"/>
<path d="M1 14.5 L11 16.5 L19.5 13.8" stroke="#e6eef2" stroke-width="0.8" fill="none"/>
<circle cx="5.5" cy="17.5" r="0.9" fill="#f4f4f4"/><circle cx="10" cy="18.5" r="0.9" fill="#f4f4f4"/>
<path d="M6.5 13 Q9 11 12 13" stroke="#222" stroke-width="0.9" fill="none"/>
</svg>
<div class="t" style="left:766px;top:740px;color:#fff;font-size:12.5px;letter-spacing:-0.55px">Számítógép-kezelés</div>
<!-- tray -->
<svg style="left:1148px;top:744px" width="13" height="8" viewBox="0 0 13 8"><path d="M0.7 7.3 L6.5 1.2 L12.3 7.3" stroke="#fff" stroke-width="1.2" fill="none"/></svg>
<svg style="left:1169px;top:742px" width="18" height="12" viewBox="0 0 18 12">
<path d="M1 0.5 L1 3 M4 0.5 L4 3" stroke="#fff" stroke-width="1"/><path d="M0 3 L5 3 L5 5 Q5 7 2.5 7 Q0 7 0 5Z" fill="#fff"/><path d="M2.5 7 L2.5 9.5 L5 9.5" stroke="#fff" stroke-width="1" fill="none"/>
<rect x="4.5" y="3.5" width="11.5" height="7.5" stroke="#fff" stroke-width="1" fill="none"/><rect x="6" y="5" width="8.5" height="4.5" fill="#fff"/><rect x="16" y="5.5" width="1.5" height="3.5" fill="#fff"/>
</svg>
<svg style="left:1197px;top:743px" width="13" height="12" viewBox="0 0 13 12">
<path d="M0.7 11.5 A11 11 0 0 1 11.5 0.7" stroke="#fff" stroke-width="1" fill="none"/>
<path d="M3.3 11.5 A8.3 8.3 0 0 1 11.5 3.3" stroke="#fff" stroke-width="1" fill="none"/>
<path d="M6 11.5 A5.6 5.6 0 0 1 11.5 6" stroke="#fff" stroke-width="1" fill="none"/>
<circle cx="11" cy="11" r="1.3" fill="#fff"/>
</svg>
<svg style="left:1218px;top:741px" width="17" height="14" viewBox="0 0 17 14">
<path d="M0.6 4.5 L3.5 4.5 L7.5 0.8 L7.5 13.2 L3.5 9.5 L0.6 9.5Z" stroke="#fff" stroke-width="1" fill="none"/>
<path d="M9.5 4.5 Q10.8 7 9.5 9.5" stroke="#fff" stroke-width="1" fill="none"/>
<path d="M11.8 2.5 Q14 7 11.8 11.5" stroke="#fff" stroke-width="1" fill="none"/>
<path d="M14 0.8 Q17.3 7 14 13.2" stroke="#999" stroke-width="1" fill="none"/>
</svg>
<div class="t" style="left:1262px;top:731px;color:#fff;font-size:12.5px;letter-spacing:-0.8px">13:11</div>
<div class="t" style="left:1244px;top:748px;color:#fff;font-size:12.5px;letter-spacing:-0.8px">2016. 09. 06.</div>
<svg style="left:1325px;top:740px" width="17" height="17" viewBox="0 0 17 17">
<path d="M0.6 0.6 L16.4 0.6 L16.4 12.4 L10 12.4 L8.5 14.5 L7 12.4 L0.6 12.4Z" stroke="#fff" stroke-width="1.2" fill="none"/>
</svg>
<div class="a" style="left:1361px;top:728px;width:1px;height:40px;background:#4a4a4a"></div>

</body></html>
